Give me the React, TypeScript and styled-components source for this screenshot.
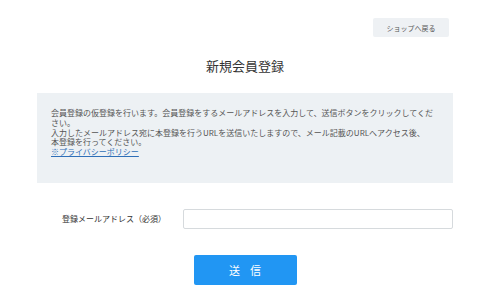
import React from 'react';
import styled, { createGlobalStyle } from 'styled-components';

const GlobalStyle = createGlobalStyle`
  html, body {
    margin: 0;
    padding: 0;
    background: #ffffff;
  }
  body {
    font-family: "Noto Sans CJK JP", "Noto Sans", sans-serif;
    color: #333333;
  }
`;

const Page = styled.div`
  width: 416px;
  margin-left: 37px;
  padding-top: 18px;
`;

const TopBar = styled.div`
  display: flex;
  justify-content: flex-end;
  padding-right: 4px;
`;

const BackButton = styled.button`
  width: 76px;
  height: 19px;
  border: none;
  border-radius: 2px;
  background: #eef1f4;
  color: #555555;
  font-family: inherit;
  font-size: 7px;
  padding: 0;
  cursor: pointer;
`;

const Title = styled.h1`
  margin: 19px 0 17px;
  font-size: 13px;
  line-height: 20px;
  font-weight: 400;
  text-align: center;
  color: #333333;
`;

const Notice = styled.div`
  background: #edf1f4;
  padding: 15px 14px 26px;
  font-size: 8px;
  line-height: 9.8px;
  color: #555555;
`;

const NoticeLine = styled.p`
  margin: 0;
`;

const PolicyLink = styled.a`
  color: #2f6fb7;
  text-decoration: underline;
`;

const FormRow = styled.div`
  display: grid;
  grid-template-columns: 146px 270px;
  align-items: center;
  margin-top: 26px;
`;

const Label = styled.label`
  padding-left: 25px;
  font-size: 8px;
  color: #333333;
`;

const Input = styled.input`
  box-sizing: border-box;
  width: 270px;
  height: 20px;
  border: 1px solid #d6dadd;
  border-radius: 2px;
  background: #ffffff;
  outline: none;
`;

const Actions = styled.div`
  display: flex;
  justify-content: center;
  margin-top: 26px;
`;

const SubmitButton = styled.button`
  width: 103px;
  height: 30px;
  border: none;
  border-radius: 2px;
  background: #2196f3;
  color: #ffffff;
  font-family: inherit;
  font-size: 11px;
  letter-spacing: 10px;
  padding: 0 0 0 10px;
  cursor: pointer;
`;

export default function App() {
  return (
    <>
      <GlobalStyle />
      <Page>
        <TopBar>
          <BackButton>ショップへ戻る</BackButton>
        </TopBar>
        <Title>新規会員登録</Title>
        <Notice>
          <NoticeLine>
            会員登録の仮登録を行います。会員登録をするメールアドレスを入力して、送信ボタンをクリックしてください。
          </NoticeLine>
          <NoticeLine>
            入力したメールアドレス宛に本登録を行うURLを送信いたしますので、メール記載のURLへアクセス後、
            <br />
            本登録を行ってください。
          </NoticeLine>
          <NoticeLine>
            <PolicyLink href="#">※プライバシーポリシー</PolicyLink>
          </NoticeLine>
        </Notice>
        <FormRow>
          <Label htmlFor="email">登録メールアドレス（必須）</Label>
          <Input id="email" type="email" />
        </FormRow>
        <Actions>
          <SubmitButton>送信</SubmitButton>
        </Actions>
      </Page>
    </>
  );
}
